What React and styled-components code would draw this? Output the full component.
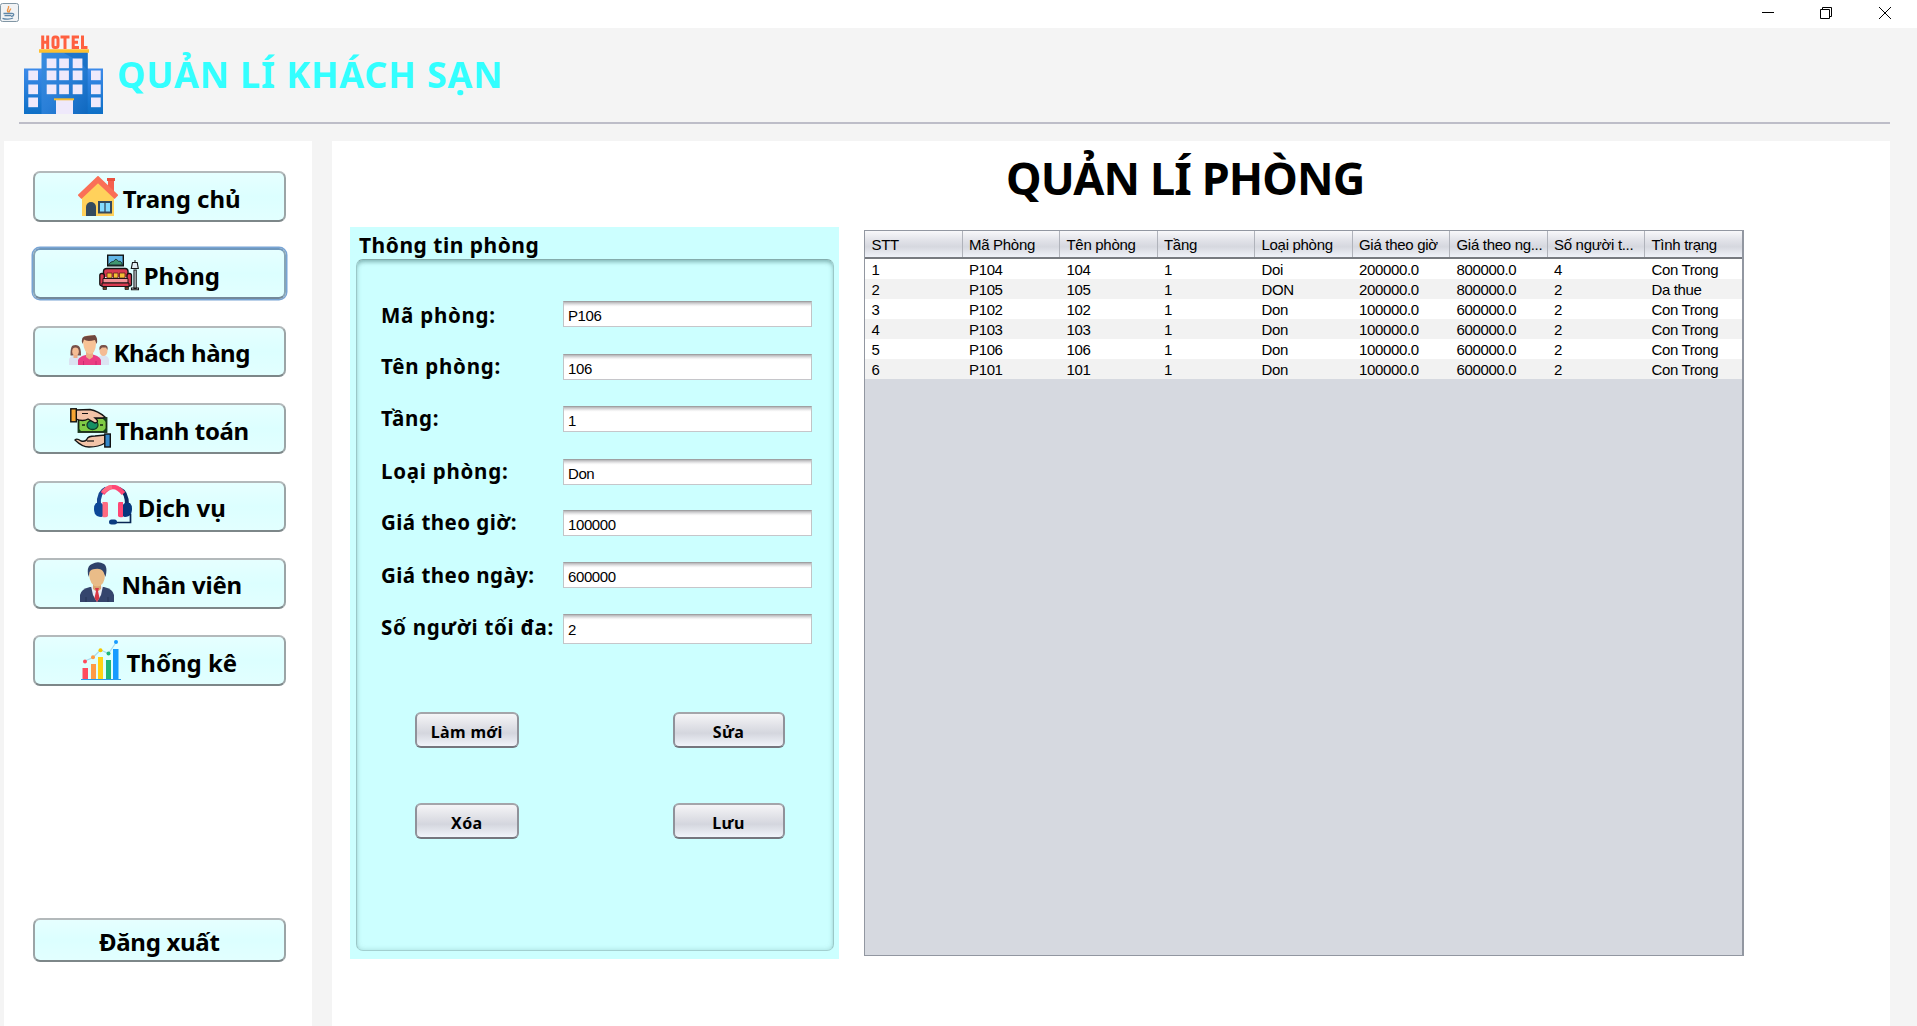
import React from "react";
import styled, { createGlobalStyle, css } from "styled-components";

const GlobalStyle = createGlobalStyle`
  * { box-sizing: border-box; }
  html, body { margin: 0; padding: 0; }
  body { background: #f4f4f4; overflow: hidden; }
`;

const heading = `"Noto Sans", "Open Sans", sans-serif`;
const plain = `"Liberation Sans", Arial, sans-serif`;

const Window = styled.div`
  width: 1917px;
  height: 1026px;
  display: flex;
  flex-direction: column;
  overflow: hidden;
  background: #f4f4f4;
  color: #000;
`;

const TitleBar = styled.div`
  height: 28px;
  flex: none;
  display: flex;
  justify-content: space-between;
  background: #fff;
  svg { display: block; }
`;
const AppMark = styled.div`
  padding-top: 3px;
`;
const Controls = styled.div`
  display: flex;
  gap: 46px;
  padding: 7px 26px 0 0;
  svg:last-child { margin-left: 1px; }
`;

const Header = styled.header`
  height: 96px;
  flex: none;
  margin: 0 27px 17px 19px;
  padding: 7px 0 0 5px;
  display: flex;
  gap: 15px;
  border-bottom: 2px solid #bdbdc8;
`;
const Brand = styled.h1`
  margin: 12px 0 0 -1px;
  font: bold 36px/56px ${heading};
  letter-spacing: 0.85px;
  color: #33ffff;
  white-space: nowrap;
`;

const Body = styled.div`
  flex: 1;
  min-height: 0;
  display: flex;
  gap: 20px;
  padding: 0 27px 0 4px;
`;

const Sidebar = styled.nav`
  width: 308px;
  flex: none;
  display: flex;
  flex-direction: column;
  gap: 26.4px;
  padding: 30px 26px 0 28.6px;
  background: #fff;
`;

const NavButton = styled.button`
  width: 253.4px;
  height: ${(p) => (p.$short ? 44.6 : 51)}px;
  flex: none;
  margin: ${(p) => (p.$short ? "205px" : "0")} 0 0;
  padding: 0 0 2px;
  display: flex;
  align-items: center;
  justify-content: center;
  gap: 5px;
  border: 2px solid;
  border-color: #b3b9bb #9ba4a6 #7d8789 #9ba4a6;
  border-radius: 7px;
  background: linear-gradient(#e6ffff 0%, #dcffff 50%, #e2ffff 100%);
  font: bold 24px/32px ${heading};
  letter-spacing: ${(p) => p.$spacing || 0}px;
  color: #000;
  white-space: nowrap;
  svg { display: block; flex: none; }
  span { position: relative; top: 3px; }
  ${(p) =>
    p.$focused &&
    css`
      box-shadow: 0 0 0 1.5px #78a4d4;
      border-color: #6f98bd #87a5b6 #74899a #87a5b6;
    `}
`;

const Main = styled.main`
  flex: 1;
  display: flex;
  flex-direction: column;
  padding-left: 18px;
  background: #fff;
`;
const Title = styled.h2`
  height: 86px;
  flex: none;
  margin: 0;
  padding: 10px 0 0 656px;
  font: bold 45px/54px ${heading};
  letter-spacing: -0.9px;
  white-space: nowrap;
`;
const Columns = styled.div`
  display: flex;
  align-items: flex-start;
  gap: 25px;
`;

const FormPanel = styled.section`
  width: 489px;
  height: 732px;
  display: flex;
  flex-direction: column;
  padding: 0 5px 8px 6px;
  background: #ccffff;
`;
const Legend = styled.h3`
  height: 32px;
  flex: none;
  margin: 0;
  padding: 4px 0 0 3px;
  font: bold 21px/28px ${heading};
  letter-spacing: 0.5px;
`;
const Frame = styled.div`
  flex: 1;
  display: flex;
  flex-direction: column;
  padding: 41px 21px 0 24px;
  border: 1.5px solid;
  border-color: #84acac #9bc8c8 #a2d0d0 #9bc8c8;
  border-radius: 7px;
  box-shadow: inset 0 4px 4px -2px rgba(60, 110, 110, 0.42), inset 0 0 5px rgba(80, 140, 140, 0.3);
`;
const Field = styled.label`
  display: flex;
  align-items: flex-start;
  height: ${(p) => p.$height}px;
  flex: none;
`;
const Caption = styled.span`
  width: 182px;
  flex: none;
  padding-top: ${(p) => p.$drop || 0}px;
  font: bold 20.5px/24px ${heading};
  letter-spacing: ${(p) => p.$spacing || 0.75}px;
  white-space: nowrap;
`;
const Entry = styled.input`
  width: 249px;
  height: ${(p) => (p.$tall ? 30 : 26)}px;
  margin: 0;
  padding: ${(p) => (p.$tall ? "1px 4px 0" : "2px 4px 0")};
  border: 1px solid;
  border-color: #a0a0a2 #c1c4c6 #c6c6ca #c1c4c6;
  border-radius: 0;
  outline: none;
  background: linear-gradient(#b4b4b6 0, #dcdcde 2px, #fafafa 4px, #fff 5px);
  font: 15px/20px ${plain};
  letter-spacing: -0.4px;
  color: #000;
`;
const Actions = styled.div`
  display: grid;
  grid-template-columns: 103.5px 112px;
  column-gap: 154px;
  row-gap: 55px;
  margin: 68px 0 0 34px;
`;
const ActionButton = styled.button`
  height: 36px;
  padding: 3px 0 0;
  border: 2px solid;
  border-color: #a4a5aa #90929a #75767e #90929a;
  border-radius: 6px;
  background: linear-gradient(#f5f5f7 0%, #dfe0e6 40%, #d4d6de 60%, #f1f4fa 100%);
  font: bold 16px/22px ${heading};
  letter-spacing: 0.35px;
  color: #000;
`;

const columns = "repeat(9, 97.5px)";
const TableBox = styled.div`
  width: 880px;
  height: 726px;
  margin-top: 3px;
  border: 1px solid #9297a1;
  border-right-width: 2px;
  background: #d6d9e0;
  font: 15px/20px ${plain};
  letter-spacing: -0.36px;
  overflow: hidden;
`;
const HeadRow = styled.div`
  display: grid;
  grid-template-columns: ${columns};
  height: 28px;
  border-bottom: 2px solid #777a80;
  background: linear-gradient(#f8f8fa 0%, #e2e3e9 35%, #d6d8df 60%, #eff2f9 100%);
`;
const HeadCell = styled.div`
  padding: 4px 0 0 6.5px;
  border-right: 1px solid #b0b3bb;
  letter-spacing: -0.3px;
  white-space: nowrap;
`;
const Row = styled.div`
  display: grid;
  grid-template-columns: ${columns};
  height: 20px;
  background: ${(p) => (p.$striped ? "#f2f2f2" : "#fff")};
`;
const Cell = styled.div`
  padding: 1px 0 0 6.5px;
  white-space: nowrap;
`;

const JavaIcon = () => (
  <svg width="19" height="19" viewBox="0 0 19 19">
    <rect x="0.500" y="0.500" width="18" height="18" rx="2" fill="#f1f3f5" stroke="#8196a4" />
    <path d="M8.500 9.500C5.500 7 9.500 6 8.500 3M9.500 9.500C8.500 7.500 11 7 10.500 5.500" fill="none" stroke="#ee9445" strokeWidth="1.400" />
    <path d="M3.500 10.500H11.500M4.500 12.700H11M11.500 10.500C15 10 14 13.500 11 13.200M2.500 15.300C5.500 16.500 10.500 16.300 13 15" fill="none" stroke="#5f87a8" strokeWidth="1.300" />
  </svg>
);

const HotelIcon = () => (
  <svg width="79" height="79" viewBox="0 0 79 79">
    <defs>
      <linearGradient id="tower" x1="0" y1="0" x2="1" y2="1">
        <stop offset="0" stopColor="#3a8de0" />
        <stop offset="0.5" stopColor="#2a7fd8" />
        <stop offset="1" stopColor="#0f68bf" />
      </linearGradient>
      <linearGradient id="wing" x1="0" y1="0" x2="0" y2="1">
        <stop offset="0" stopColor="#3d8bea" />
        <stop offset="1" stopColor="#0d6fc6" />
      </linearGradient>
    </defs>
    <g fill="none" stroke="#ff6040" strokeWidth="3">
      <path d="M18.700 .5V14M23.700 .5V14M18.700 7.300H23.700" />
      <rect x="29" y="2" width="5" height="10.500" rx="2" />
      <path d="M36.500 2H45.500M41 2V14M55 2H49.200V12.500H55M49.200 7.300H54M58.500 .5V12.500H63.500" />
    </g>
    <path d="M0 33.500H18V79H0ZM63 33.500H79V79H63Z" fill="url(#wing)" />
    <path d="M17.500 17H63.700V79H17.500Z" fill="url(#tower)" />
    <path d="M40 18H63.700V35L56 27Z" fill="#0d65ba" opacity=".5" />
    <path d="M15 14.300H65V17.700H15Z" fill="#ffc02e" />
    <g fill="#efe9fb">
      {[23.5, 35.5, 49.5].map((y) => [22.7, 35.2, 48.7].map((x) => <rect key={`${x}-${y}`} x={x} y={y} width="9.700" height="9.700" />))}
      {[35.5, 49.5, 62.5].map((y) => [4.3, 67].map((x) => <rect key={`${x}-${y}`} x={x} y={y} width="9.700" height="9.700" />))}
      <rect x="32" y="65" width="17" height="14" />
    </g>
    <path d="M30 63.300H50V65.300H30Z" fill="#f5bd32" />
  </svg>
);

const HomeIcon = () => (
  <svg width="40" height="40" viewBox="0 0 40 40">
    <path d="M30 3H36V16H30Z" fill="#f4604f" />
    <path d="M29 2H37V5H29Z" fill="#e9513f" />
    <path d="M4 18L20 4L36 18V40H4Z" fill="#ffd15b" />
    <path d="M1.500 21L20 3.500L38.500 21" fill="none" stroke="#fa6f57" strokeWidth="5.500" />
    <path d="M8 40V31a5 5 0 0 1 10 0V40Z" fill="#344a5e" />
    <rect x="21" y="26" width="12" height="10.500" fill="#84dbff" stroke="#344a5e" strokeWidth="2" />
    <path d="M27 26V37" stroke="#344a5e" strokeWidth="1.300" />
  </svg>
);

const RoomIcon = () => (
  <svg width="40" height="40" viewBox="0 0 40 40">
    <rect x="8.700" y="2.200" width="15.600" height="10.600" fill="#62b8e8" stroke="#111" strokeWidth="1.400" />
    <path d="M9.500 12C12 7.500 14 9.500 15.500 7.500C17 4.500 19 8.500 20 8.500C22 7.500 23 10.500 23.500 12Z" fill="#3f9670" stroke="#162b2a" />
    <path d="M4.500 24V18.500Q4.500 15.500 8 15.500H26Q29 15.500 29 18.500V24" fill="#d83a50" stroke="#161616" strokeWidth="1.400" />
    <path d="M8 20H13V25H8ZM14.500 20H19V25H14.500ZM20.500 20H26V25H20.500Z" fill="#f4be35" stroke="#5d2420" strokeWidth=".8" />
    <rect x=".8" y="20.500" width="4.500" height="12.500" rx="2" fill="#d83a50" stroke="#111" strokeWidth="1.300" />
    <rect x="28" y="20.500" width="4.500" height="12.500" rx="2" fill="#d83a50" stroke="#111" strokeWidth="1.300" />
    <path d="M4 25.500H29V30H4Z" fill="#f49297" stroke="#251117" />
    <path d="M3 30H30V33.500H3Z" fill="#d83a50" stroke="#151515" />
    <path d="M4 34H7.500V36.500H4ZM26 34H29.500V36.500H26Z" fill="#74482c" stroke="#111" strokeWidth=".7" />
    <path d="M33.500 9.500H38.200L39.300 15.500H32.300ZM35 17H37.200V35.500H35ZM32.500 35H39.500V36.800H32.500Z" fill="#e3edf2" stroke="#151515" strokeWidth="1.100" />
    <path d="M36 7V9" stroke="#151515" />
  </svg>
);

const GuestsIcon = () => (
  <svg width="40" height="40" viewBox="0 0 40 40">
    <path d="M1.500 25.500C1.500 18 2 15 6.500 15C11 15 12 19 12 25.500Z" fill="#775149" />
    <path d="M0 35V30Q0 26 6.500 25Q12 26 12 30V35Z" fill="#dbe4f2" />
    <ellipse cx="6.500" cy="21.500" rx="3.300" ry="4" fill="#f4bc94" />
    <path d="M4.500 25H8.500V28H4.500Z" fill="#edad85" />
    <path d="M28 35V30Q28 26 34 25Q40 26 40 30V35Z" fill="#dbe4f2" />
    <ellipse cx="34.500" cy="20.500" rx="4" ry="5.500" fill="#f4bc94" />
    <path d="M30.500 20Q29.500 14.500 35 15Q39.500 15 38.500 20L37 17.500H33Z" fill="#775149" />
    <path d="M9 35V30Q10 26 20.500 24Q30 25 32 30V35Z" fill="#eb3f83" />
    <path d="M17 22H24V27L20.500 29.500L17 27Z" fill="#edad85" />
    <path d="M14 12Q13 5 20 5.500Q28 4 27 14Q26.500 24 20.500 24Q15 23 14 12Z" fill="#f7c296" />
    <path d="M13.500 14Q11 6 18 6L26 5Q29.500 9 27.500 14L26 10Q18 12 15 9.500Z" fill="#70473f" />
    <path d="M14.500 35V31M27 35V31" stroke="#cc2b70" />
  </svg>
);

const PaymentIcon = () => (
  <svg width="41" height="40" viewBox="0 0 41 40">
    <rect x="8.500" y="10" width="28" height="14" fill="#80cc46" stroke="#152513" strokeWidth="1.800" />
    <path d="M8 20L12 24H8ZM37 10H32L37 15ZM37 24V19L32 24Z" fill="#153d19" />
    <ellipse cx="22.500" cy="17" rx="5.500" ry="4.500" fill="#169063" stroke="#123d29" strokeWidth="1.300" />
    <path d="M12 17H15M30 17H33" stroke="#152513" strokeWidth="1.500" />
    <path d="M6 2L20 1.500Q28 3 35 9L33 10H25Q30 14 25 15L18 11Q13 14 6 11Z" fill="#f2c4a8" stroke="#141414" strokeWidth="1.300" />
    <path d="M12 5.500H18" stroke="#111" />
    <rect x=".8" y=".8" width="5.500" height="13" fill="#f5a431" stroke="#111" strokeWidth="1.400" />
    <path d="M5 32Q7 30 11 33Q16 34 17 31Q18 28 25 28L35 27V35Q29 39 19 39Q12 39 5 32Z" fill="#f2c4a8" stroke="#141414" strokeWidth="1.300" />
    <path d="M17 33H24" stroke="#111" strokeWidth="1.200" />
    <rect x="34.800" y="26" width="5.500" height="13" fill="#3588c9" stroke="#111" strokeWidth="1.400" />
  </svg>
);

const ServiceIcon = () => (
  <svg width="40" height="40" viewBox="0 0 40 40">
    <path d="M6 20Q5 7 13 3.500" fill="none" stroke="#164792" strokeWidth="4" />
    <path d="M34 20Q34 7 26.500 4" fill="none" stroke="#0b2b62" strokeWidth="4" />
    <path d="M9.500 8.500Q20-4.500 30.500 8.500" fill="none" stroke="#ff4775" strokeWidth="4.500" />
    <path d="M10 7Q14 2.500 19 2" fill="none" stroke="#ff6c83" strokeWidth="4" />
    <path d="M3 18Q9 17 10 20V31Q9 33 4 31Q1 29 1 24Q1 20 3 18Z" fill="#0d4898" />
    <path d="M37 18Q31 17 30 20V31Q31 33 36 31Q39 29 39 24Q39 20 37 18Z" fill="#06387e" />
    <path d="M9.500 17H14Q15 17 15 19V31Q14 33 9.500 32Z" fill="#ff6b80" />
    <path d="M30 17H26Q25 17 25 19V31Q26 33 30 32Z" fill="#ff4775" />
    <path d="M37.500 29V37.500H22" fill="none" stroke="#082654" strokeWidth="1.700" />
    <rect x="16" y="34.500" width="8" height="5" rx="2.500" fill="#0a3b80" />
  </svg>
);

const StaffIcon = () => (
  <svg width="40" height="40" viewBox="0 0 40 40">
    <path d="M3 40V33Q4 27 13 25H27Q36 27 37 33V40Z" fill="#35456d" />
    <path d="M14 24H26L24 33L20 40L16 33Z" fill="#e9eef6" />
    <path d="M16 21H24V27L20 30L16 27Z" fill="#d9a56f" />
    <path d="M18 26H22L21 29L22.500 36L20 40L17.500 36L19 29Z" fill="#d83746" />
    <path d="M12 12Q11 3 20 3Q29 3 28 12Q28 24 20 24.500Q13 24 12 12Z" fill="#e9bc88" />
    <path d="M11.500 15Q9 4 15 2Q21-1.500 27 2Q31 5 28.500 15L26.500 10Q24 6 18 7Q14 7 12.500 10Z" fill="#2f426a" />
    <path d="M9 40V35M31 40V35" stroke="#263456" />
  </svg>
);

const StatsIcon = () => (
  <svg width="40" height="40" viewBox="0 0 40 40">
    <path d="M4 21L12 17.500L19.500 10L27.500 13.500L35 2.500" fill="none" stroke="#a9dbef" strokeWidth="1.200" />
    <path d="M1.500 28H7V39H1.500Z" fill="#ff4b5c" />
    <path d="M10 24H15V39H10Z" fill="#ff9b45" />
    <path d="M17 17H22V39H17Z" fill="#ffd314" />
    <path d="M25 20H30V39H25Z" fill="#1fb778" />
    <path d="M32 9H37.500V39H32Z" fill="#179bff" />
    <circle cx="4" cy="21.500" r="2" fill="#ff4b5c" />
    <circle cx="12" cy="17.300" r="2" fill="#ff9b45" />
    <circle cx="19.500" cy="10.200" r="2" fill="#f5c700" />
    <circle cx="27.500" cy="13.500" r="2" fill="#1fb778" />
    <circle cx="35" cy="2" r="2" fill="#179bff" />
    <path d="M0 39.500H40" stroke="#289cec" />
  </svg>
);

const navItems = [
  { label: "Trang chủ", icon: HomeIcon },
  { label: "Phòng", icon: RoomIcon, focused: true },
  { label: "Khách hàng", icon: GuestsIcon, spacing: -0.45 },
  { label: "Thanh toán", icon: PaymentIcon, spacing: -0.35 },
  { label: "Dịch vụ", icon: ServiceIcon },
  { label: "Nhân viên", icon: StaffIcon, spacing: -0.2 },
  { label: "Thống kê", icon: StatsIcon },
];

const fields = [
  { label: "Mã phòng:", value: "P106", height: 53, drop: 2 },
  { label: "Tên phòng:", value: "106", height: 52 },
  { label: "Tầng:", value: "1", height: 53 },
  { label: "Loại phòng:", value: "Don", height: 51 },
  { label: "Giá theo giờ:", value: "100000", height: 52, spacing: 0.45 },
  { label: "Giá theo ngày:", value: "600000", height: 52, drop: 1, spacing: 0.45 },
  { label: "Số người tối đa:", value: "2", height: 30, drop: 1, tall: true },
];

const tableHead = ["STT", "Mã Phòng", "Tên phòng", "Tầng", "Loại phòng", "Giá theo giờ", "Giá theo ng...", "Số người t...", "Tình trạng"];
const rooms = [
  ["1", "P104", "104", "1", "Doi", "200000.0", "800000.0", "4", "Con Trong"],
  ["2", "P105", "105", "1", "DON", "200000.0", "800000.0", "2", "Da thue"],
  ["3", "P102", "102", "1", "Don", "100000.0", "600000.0", "2", "Con Trong"],
  ["4", "P103", "103", "1", "Don", "100000.0", "600000.0", "2", "Con Trong"],
  ["5", "P106", "106", "1", "Don", "100000.0", "600000.0", "2", "Con Trong"],
  ["6", "P101", "101", "1", "Don", "100000.0", "600000.0", "2", "Con Trong"],
];

export default function App() {
  return (
    <Window>
      <GlobalStyle />
      <TitleBar>
        <AppMark><JavaIcon /></AppMark>
        <Controls>
          <svg width="12" height="12" viewBox="0 0 12 12"><path d="M0 5.500H12" stroke="#000" /></svg>
          <svg width="12" height="12" viewBox="0 0 12 12"><path d="M.5 2.500H9.500V11.500H.5ZM2.500 2.500V.5H11.500V9.500H9.500" fill="none" stroke="#000" /></svg>
          <svg width="12" height="12" viewBox="0 0 12 12"><path d="M0 0L12 12M12 0L0 12" stroke="#000" /></svg>
        </Controls>
      </TitleBar>
      <Header>
        <HotelIcon />
        <Brand>QUẢN LÍ KHÁCH SẠN</Brand>
      </Header>
      <Body>
        <Sidebar>
          {navItems.map(({ label, icon: Icon, focused, spacing }) => (
            <NavButton key={label} $focused={focused} $spacing={spacing}>
              <Icon />
              <span>{label}</span>
            </NavButton>
          ))}
          <NavButton $short $spacing={-0.3}><span>Đăng xuất</span></NavButton>
        </Sidebar>
        <Main>
          <Title>QUẢN LÍ PHÒNG</Title>
          <Columns>
            <FormPanel>
              <Legend>Thông tin phòng</Legend>
              <Frame>
                {fields.map((f) => (
                  <Field key={f.label} $height={f.height}>
                    <Caption $drop={f.drop} $spacing={f.spacing}>{f.label}</Caption>
                    <Entry defaultValue={f.value} $tall={f.tall} />
                  </Field>
                ))}
                <Actions>
                  <ActionButton>Làm mới</ActionButton>
                  <ActionButton>Sửa</ActionButton>
                  <ActionButton>Xóa</ActionButton>
                  <ActionButton>Lưu</ActionButton>
                </Actions>
              </Frame>
            </FormPanel>
            <TableBox>
              <HeadRow>{tableHead.map((h) => <HeadCell key={h}>{h}</HeadCell>)}</HeadRow>
              {rooms.map((r, i) => (
                <Row key={r[0]} $striped={i % 2 === 1}>
                  {r.map((c, j) => <Cell key={j}>{c}</Cell>)}
                </Row>
              ))}
            </TableBox>
          </Columns>
        </Main>
      </Body>
    </Window>
  );
}
